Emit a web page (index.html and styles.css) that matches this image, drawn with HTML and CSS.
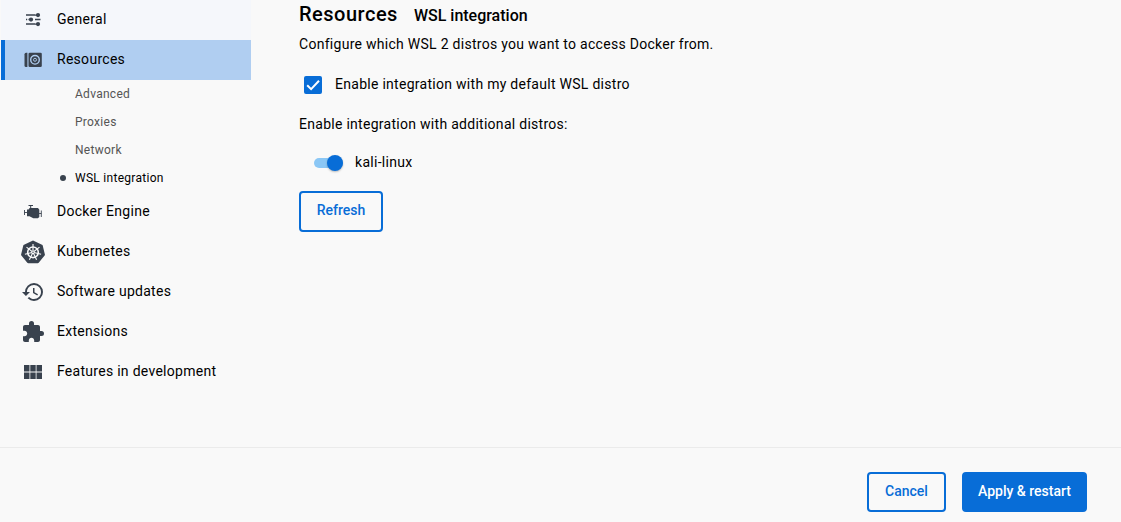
FILE: index.html
```html
<!DOCTYPE html>
<html lang="en">
<head>
<meta charset="utf-8">
<title>Settings</title>
<link rel="stylesheet" href="styles.css">
</head>
<body>
<div class="app">
  <div class="body">
    <nav class="sidebar">
      <a class="item hover"><svg class="icon" viewBox="0 0 24 24"><path d="M5 7.100h9M5 11.600h1.200M7.500 11.600h4M14 11.600h5.500M5 16.100h9" stroke="#39424e" stroke-width="1.500"/><path d="M14 7.100h4M14 16.100h4" stroke="#39424e" stroke-width="1.200"/><circle cx="17" cy="7.100" r="2.100"/><circle cx="10" cy="11.600" r="2.100"/><circle cx="17" cy="16.100" r="2.100"/></svg><span>General</span></a>
      <a class="item selected"><svg class="icon" viewBox="0 0 24 24"><path d="M5 4.700h1.400v14.300H5a1.500 1.500 0 0 1-1.500-1.500V6.200A1.500 1.500 0 0 1 5 4.700z"/><rect x="7.500" y="4.700" width="13.300" height="14.300" rx="1.300"/><g fill="none" stroke="#b0cef1"><circle cx="14" cy="11.800" r="4.300" stroke-width="1.400"/><circle cx="14" cy="11.800" r="1.500" stroke-width=".9"/></g></svg><span>Resources</span></a>
      <div class="sub">
        <a>Advanced</a>
        <a>Proxies</a>
        <a>Network</a>
        <a class="current">WSL integration</a>
      </div>
      <a class="item"><svg class="icon" viewBox="0 0 24 24"><path d="M6 9.500h1.500L8.700 8h8.300l1.300 1.700V17l-1.500 1.300h-4.500L8.500 16.200H6z"/><path d="M7.500 5.500h4.500M9.700 5.500v3" stroke="#39424e" fill="none" stroke-width="1"/><path d="M3.500 10v5M3.500 12.500H6M20.300 10.500v6.500M18 13.500h2.300" stroke="#39424e" fill="none" stroke-width=".9"/></svg><span>Docker Engine</span></a>
      <a class="item"><svg class="icon" viewBox="0 0 24 24"><path d="M12 .5l9 4.200c.4.200.6.400.7.800l2.200 9c.1.400 0 .8-.3 1.100l-5.900 7.100c-.3.300-.6.500-1 .5H7.300c-.4 0-.7-.2-1-.5L.4 15.600c-.3-.3-.4-.7-.3-1.100l2.200-9c.1-.4.300-.6.700-.8z"/><g fill="none" stroke="#f9f9f9"><circle cx="12" cy="12.300" r="5.300" stroke-width="1.600"/><path stroke-width="1.150" d="M12 12.300V4M12 12.300l6.500-5.200M12 12.300l8.100 1.900M12 12.300l3.600 7.500M12 12.300l-3.600 7.500M12 12.300l-8.100 1.900M12 12.300L5.500 7.100"/></g><circle cx="12" cy="12.300" r="1.600" fill="#f9f9f9"/><circle cx="12" cy="12.300" r=".7"/></svg><span>Kubernetes</span></a>
      <a class="item"><svg class="icon" viewBox="0 0 24 24"><path d="M13 3a9 9 0 0 0-9 9H1l3.890 3.890.07.14L9 12H6c0-3.870 3.130-7 7-7s7 3.130 7 7-3.130 7-7 7c-1.930 0-3.680-.79-4.940-2.060l-1.420 1.420A8.954 8.954 0 0 0 13 21a9 9 0 0 0 0-18zm-1 5v5l4.280 2.540.72-1.210-3.500-2.080V8H12z"/></svg><span>Software updates</span></a>
      <a class="item"><svg class="icon" viewBox="0 0 24 24"><path d="M20.500 11H19V7c0-1.100-.9-2-2-2h-4V3.500a2.500 2.500 0 0 0-5 0V5H4c-1.100 0-1.990.9-1.990 2v3.800H3.500c1.490 0 2.700 1.210 2.700 2.700s-1.210 2.700-2.700 2.700H2V20c0 1.100.9 2 2 2h3.800v-1.500c0-1.490 1.210-2.700 2.700-2.700s2.700 1.210 2.700 2.700V22H17c1.100 0 2-.9 2-2v-4h1.500a2.500 2.500 0 0 0 0-5z"/></svg><span>Extensions</span></a>
      <a class="item"><svg class="icon" viewBox="0 0 24 24"><path d="M3 5h5.500v6.400H3zM9.300 5h5.400v6.400H9.300zM15.500 5H21v6.400h-5.500zM3 12.500h5.500V19H3zM9.300 12.500h5.400V19H9.300zM15.500 12.500H21V19h-5.500z"/></svg><span>Features in development</span></a>
    </nav>
    <main class="content">
      <header class="heading"><h1>Resources</h1><h2>WSL integration</h2></header>
      <p class="line">Configure which WSL 2 distros you want to access Docker from.</p>
      <label class="check-row"><span class="check"><svg viewBox="0 0 18 18"><path d="M3.200 9.200l3.900 3.900 7.900-8.400" fill="none" stroke="#fff" stroke-width="2"/></svg></span><span>Enable integration with my default WSL distro</span></label>
      <p class="line">Enable integration with additional distros:</p>
      <label class="switch-row"><span class="track"><span class="thumb"></span></span><span>kali-linux</span></label>
      <button class="btn refresh">Refresh</button>
    </main>
  </div>
  <footer class="footer">
    <button class="btn cancel">Cancel</button>
    <button class="btn primary">Apply &amp; restart</button>
  </footer>
</div>
</body>
</html>
```
FILE: styles.css
```css
* { box-sizing: border-box; }
body {
  margin: 0;
  background: #f9f9f9;
  color: #000;
  font: 14px/20px Roboto, sans-serif;
  letter-spacing: 0.28px;
}
.app { display: flex; flex-direction: column; height: 522px; overflow: hidden; }
.body { display: flex; height: 447px; }
.sidebar { width: 251px; padding-left: 1px; flex: none; }
.item {
  display: flex;
  align-items: center;
  gap: 12px;
  height: 40px;
  padding: 0 0 0 20px;
}
.item span { padding-bottom: 2px; }
.hover { background: #f5f7fb; }
.selected { background: #b0cef1; border-left: 4px solid #086dd7; padding-left: 16px; }
.icon { width: 24px; height: 24px; fill: #39424e; flex: none; }
.sub a {
  display: flex;
  align-items: center;
  height: 28px;
  padding-left: 74px;
  font-size: 12px;
  color: #555;
}
.sub .current { color: #000; padding-left: 59px; }
.current::before {
  content: "";
  width: 6px;
  height: 6px;
  margin-right: 9px;
  border-radius: 50%;
  background: #39424e;
}
.content { padding: 2px 0 0 48px; }
.heading { display: flex; align-items: baseline; gap: 16px; height: 32px; }
h1, h2, p { margin: 0; }
h1 { font-size: 20px; line-height: 24px; font-weight: 500; letter-spacing: 0.5px; }
h2 { font-size: 16px; line-height: 24px; font-weight: 500; letter-spacing: 0; }
.line { height: 20px; }
.check-row { display: flex; align-items: center; gap: 13px; height: 20px; margin: 20px 0 20px 5px; }
.check { width: 18px; height: 18px; border-radius: 2px; background: #086dd7; margin-top: 2px; }
.check svg { display: block; width: 18px; height: 18px; }
.switch-row { display: flex; align-items: center; gap: 12px; height: 20px; margin: 18px 0 19px 15px; }
.track {
  display: flex;
  align-items: center;
  justify-content: flex-end;
  width: 29px;
  height: 10px;
  margin-top: 2px;
  border-radius: 5px;
  background: #8bc7f5;
}
.thumb { width: 16px; height: 16px; border-radius: 50%; background: #086dd7; box-shadow: 0 1px 2px rgba(0,0,0,.25); }
.btn {
  height: 40px;
  padding: 0 0 2px;
  border: 2px solid #086dd7;
  border-radius: 4px;
  background: #f9f9f9;
  color: #086dd7;
  font: 500 14px/20px Roboto, sans-serif;
  letter-spacing: 0;
}
.refresh { width: 84px; height: 41px; padding-bottom: 3px; }
.footer {
  display: flex;
  justify-content: flex-end;
  gap: 16px;
  height: 75px;
  padding: 24px 34px 0 0;
  border-top: 1px solid #ebebeb;
}
.cancel { width: 79px; }
.primary { width: 125px; background: #086dd7; color: #fff; }
```
